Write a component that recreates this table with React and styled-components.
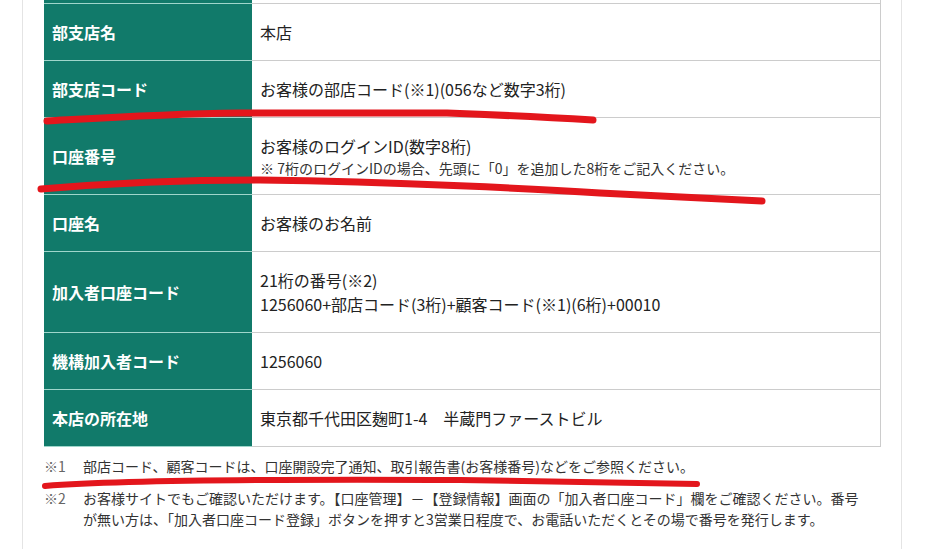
import React from 'react'
import styled, { createGlobalStyle } from 'styled-components'

const GlobalStyle = createGlobalStyle`
  html, body {
    margin: 0;
    padding: 0;
    background: #ffffff;
  }
  body {
    font-family: "Noto Sans CJK JP", "Noto Sans", sans-serif;
    overflow: hidden;
  }
`

const Page = styled.div`
  position: relative;
  width: 945px;
  height: 549px;
  overflow: hidden;
  background: #ffffff;
`

const Column = styled.div`
  margin-left: 22px;
  width: 880px;
  height: 100%;
  border-left: 1px solid #e4e4e4;
  border-right: 1px solid #e4e4e4;
  padding-left: 21px;
  box-sizing: border-box;
`

const InfoTable = styled.table`
  width: 837px;
  border-collapse: collapse;
  table-layout: fixed;
`

const Head = styled.th`
  width: 208px;
  box-sizing: border-box;
  background: #117a6a;
  color: #ffffff;
  font-size: 16px;
  font-weight: 700;
  text-align: left;
  vertical-align: middle;
  line-height: 24px;
  padding: ${props => (props.cut ? '0' : '16px 8px')};
  height: ${props => (props.cut ? '3px' : 'auto')};
  border-bottom: 1px solid #9fd6cb;
`

const Value = styled.td`
  background: #ffffff;
  color: #222222;
  font-size: 16px;
  line-height: 24px;
  vertical-align: middle;
  padding: ${props => (props.cut ? '0' : '16px 8px')};
  height: ${props => (props.cut ? '3px' : 'auto')};
  border-bottom: 1px solid #cccccc;
  border-right: 1px solid #cccccc;
`

const SubLine = styled.div`
  font-size: 14px;
  line-height: 20px;
  color: #333333;
`

const Notes = styled.div`
  margin-top: 9px;
  display: flex;
  flex-direction: column;
  gap: 11px;
`

const Note = styled.div`
  display: flex;
  font-size: 14px;
  line-height: 21px;
  color: #333333;
`

const NoteMark = styled.span`
  flex: 0 0 39px;
  color: #666666;
`

const NoteText = styled.span`
  flex: 1;
`

const Marker = styled.svg`
  position: absolute;
  left: 0;
  top: 0;
  pointer-events: none;
`

const rows = [
  { head: '部支店名', lines: ['本店'] },
  { head: '部支店コード', lines: ['お客様の部店コード(※1)(056など数字3桁)'] },
  {
    head: '口座番号',
    lines: ['お客様のログインID(数字8桁)'],
    sub: '※ 7桁のログインIDの場合、先頭に「0」を追加した8桁をご記入ください。'
  },
  { head: '口座名', lines: ['お客様のお名前'] },
  {
    head: '加入者口座コード',
    lines: ['21桁の番号(※2)', '1256060+部店コード(3桁)+顧客コード(※1)(6桁)+00010']
  },
  { head: '機構加入者コード', lines: ['1256060'] },
  { head: '本店の所在地', lines: ['東京都千代田区麹町1-4　半蔵門ファーストビル'] }
]

const App = () => {
  return (
    <Page>
      <GlobalStyle />
      <Column>
        <InfoTable>
          <tbody>
            <tr>
              <Head cut />
              <Value cut />
            </tr>
            {rows.map(row => (
              <tr key={row.head}>
                <Head>{row.head}</Head>
                <Value>
                  {row.lines.map(line => <div key={line}>{line}</div>)}
                  {row.sub && <SubLine>{row.sub}</SubLine>}
                </Value>
              </tr>
            ))}
          </tbody>
        </InfoTable>
        <Notes>
          <Note>
            <NoteMark>※1</NoteMark>
            <NoteText>部店コード、顧客コードは、口座開設完了通知、取引報告書(お客様番号)などをご参照ください。</NoteText>
          </Note>
          <Note>
            <NoteMark>※2</NoteMark>
            <NoteText>
              お客様サイトでもご確認いただけます。【口座管理】－【登録情報】画面の「加入者口座コード」欄をご確認ください。番号
              <br />
              が無い方は、「加入者口座コード登録」ボタンを押すと3営業日程度で、お電話いただくとその場で番号を発行します。
            </NoteText>
          </Note>
        </Notes>
      </Column>
      <Marker width="945" height="549" viewBox="0 0 945 549">
        <g fill="none" stroke="#e3161c" strokeLinecap="round" strokeLinejoin="round">
          <path strokeWidth="7" d="M47 121 C 100 118 160 114 240 113 L 447 113 C 500 115 560 118 593 120" />
          <path strokeWidth="7" d="M41 189 C 100 184 180 180 260 180 C 400 182 540 189 600 193 L 762 201" />
          <path strokeWidth="6" d="M45 486 C 110 481 260 479 460 480 L 697 484" />
        </g>
      </Marker>
    </Page>
  )
}

export default App
